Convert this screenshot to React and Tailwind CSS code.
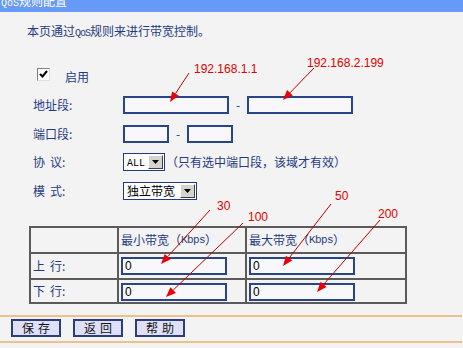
import React from "react";

const arrows = [
  [189, 73, 170, 102],
  [314, 68, 283, 100],
  [210, 210, 161, 264],
  [243, 223, 166, 297],
  [331, 204, 283, 266],
  [380, 220, 317, 292],
];

const notes = [
  { text: "192.168.1.1", left: 194, top: 63 },
  { text: "192.168.2.199", left: 307, top: 57 },
  { text: "30", left: 217, top: 200 },
  { text: "100", left: 248, top: 211 },
  { text: "50", left: 335, top: 190 },
  { text: "200", left: 378, top: 208 },
];

function Arrow({ x1, y1, x2, y2 }) {
  const dx = x2 - x1;
  const dy = y2 - y1;
  const len = Math.hypot(dx, dy);
  const ux = dx / len;
  const uy = dy / len;
  const bx = x2 - ux * 10;
  const by = y2 - uy * 10;
  const px = -uy * 4;
  const py = ux * 4;
  return (
    <g>
      <line x1={x1} y1={y1} x2={bx} y2={by} stroke="#c40000" strokeWidth="1" />
      <polygon
        points={`${x2},${y2} ${bx + px},${by + py} ${bx - px},${by - py}`}
        fill="#ee0000"
      />
    </g>
  );
}

function Field({ w = "w-[106px]", value = "" }) {
  return (
    <input
      type="text"
      readOnly
      value={value}
      className={`${w} h-[18px] border-2 border-[#28458a] bg-[#f8f8fb] px-[2px] text-[12px] text-black outline-none font-['Liberation_Sans',sans-serif]`}
    />
  );
}

function Select({ w, children }) {
  return (
    <div
      className={`${w} h-full border border-[#1f3b82] bg-white flex items-center justify-between p-[1px]`}
    >
      <span className="pl-[2px] text-black leading-none">{children}</span>
      <span className="w-[15px] h-full bg-[#d6d3ce] border border-t-white border-l-white border-b-[#404040] border-r-[#404040] flex items-center justify-center">
        <svg width="7" height="4" viewBox="0 0 7 4">
          <path d="M0 0h7L3.5 4z" fill="#000" />
        </svg>
      </span>
    </div>
  );
}

// two-character label with a gap, as in "协 议:"
function Spaced({ a, b }) {
  return (
    <span>
      {a}
      <span className="ml-[5px]">{b}:</span>
    </span>
  );
}

function Row({ label, className, children }) {
  return (
    <div className={`flex items-center h-[18px] ${className}`}>
      <div className="w-[123px] pl-[33px]">{label}</div>
      {children}
    </div>
  );
}

function Button({ a, b }) {
  return (
    <div className="w-[50px] h-[18px] border-2 border-[#2b3d7e] bg-[#dfe0f8] flex items-center justify-center text-[#111] text-[12px] leading-none">
      {a}
      <span className="ml-[4px]">{b}</span>
    </div>
  );
}

export default function App() {
  return (
    <div className="relative w-[463px] h-[348px] overflow-hidden bg-[#f3f3f3] font-['Noto_Sans_CJK_SC',sans-serif] text-[12px] text-[#1f3b82]">
      <div className="h-[12px] bg-[#6799f6] overflow-hidden pl-[1px]">
        <div className="-mt-[5px] leading-[12px] text-white">
          <span className="font-['Liberation_Mono',monospace] text-[10px]">QoS</span>
          规则配置
        </div>
      </div>

      <div className="mt-[10px] h-[18px] leading-[18px] pl-[27px]">
        本页通过
        <span className="font-['Liberation_Mono',monospace] text-[10px] tracking-[-1px]">QoS</span>
        规则来进行带宽控制。
      </div>

      <div className="mt-[25px] h-[18px] flex items-center pl-[37px]">
        <div className="w-[13px] h-[13px] border border-t-[#808080] border-l-[#808080] border-b-[#e0e0e0] border-r-[#e0e0e0] bg-white flex items-center justify-center">
          <svg width="9" height="8" viewBox="0 0 9 8">
            <path d="M1 4l2.5 2.5L8 1" fill="none" stroke="#000" strokeWidth="2" />
          </svg>
        </div>
        <span className="ml-[15px] mt-[5px]">启用</span>
      </div>

      <Row label="地址段:" className="mt-[13px]">
        <Field />
        <span className="w-[18px] text-center">-</span>
        <Field />
      </Row>

      <Row label="端口段:" className="mt-[11px]">
        <Field w="w-[46px]" />
        <span className="w-[18px] text-center">-</span>
        <Field w="w-[46px]" />
      </Row>

      <Row label={<Spaced a="协" b="议" />} className="mt-[10px]">
        <Select w="w-[42px]">
          <span className="font-['Liberation_Mono',monospace] text-[10px]">ALL</span>
        </Select>
        <span className="ml-[1px]">（只有选中端口段，该域才有效）</span>
      </Row>

      <Row label={<Spaced a="模" b="式" />} className="mt-[11px]">
        <Select w="w-[74px]">独立带宽</Select>
      </Row>

      <div className="ml-[29px] mt-[26px] w-[378px] grid grid-cols-[86px_126px_158px] grid-rows-[24px_24px_22px] gap-[2px] bg-[#5b5b5b] p-[2px]">
        <div className="bg-[#f3f3f3]" />
        <div className="bg-[#f3f3f3] flex items-center pl-[2px]">
          最小带宽（<span className="font-['Liberation_Mono',monospace] text-[11px] tracking-[-0.6px]">Kbps</span>）
        </div>
        <div className="bg-[#f3f3f3] flex items-center pl-[2px]">
          最大带宽（<span className="font-['Liberation_Mono',monospace] text-[11px] tracking-[-0.6px]">Kbps</span>）
        </div>

        <div className="bg-[#f3f3f3] flex items-center pl-[2px]">
          <Spaced a="上" b="行" />
        </div>
        <div className="bg-[#f3f3f3] pl-[2px] pt-[2px]">
          <Field value="0" />
        </div>
        <div className="bg-[#f3f3f3] pl-[2px] pt-[2px]">
          <Field value="0" />
        </div>

        <div className="bg-[#f3f3f3] flex items-center pl-[2px]">
          <Spaced a="下" b="行" />
        </div>
        <div className="bg-[#f3f3f3] pl-[2px] pt-[2px]">
          <Field value="0" />
        </div>
        <div className="bg-[#f3f3f3] pl-[2px] pt-[2px]">
          <Field value="0" />
        </div>
      </div>

      <div className="mt-[11px] w-[462px] h-[2px] bg-[#ebc18c]" />
      <div className="mt-[2px] h-[18px] flex gap-[12px] pl-[11px]">
        <Button a="保" b="存" />
        <Button a="返" b="回" />
        <Button a="帮" b="助" />
      </div>
      <div className="mt-[4px] w-[462px] h-[2px] bg-[#ebc18c]" />

      <svg className="absolute inset-0 pointer-events-none" width="463" height="348">
        {arrows.map(([x1, y1, x2, y2], i) => (
          <Arrow key={i} x1={x1} y1={y1} x2={x2} y2={y2} />
        ))}
      </svg>
      {notes.map((n) => (
        <span
          key={n.text}
          className="absolute leading-[12px] text-[12px] text-[#e00000] font-['Liberation_Sans',sans-serif]"
          style={{ left: n.left, top: n.top }}
        >
          {n.text}
        </span>
      ))}
    </div>
  );
}
